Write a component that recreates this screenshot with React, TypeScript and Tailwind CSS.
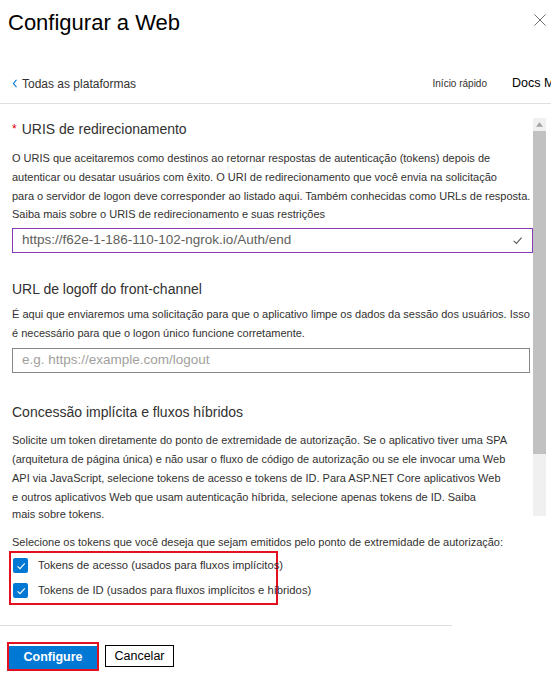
import React from "react";

const Check = ({ className }: { className?: string }) => (
  <svg viewBox="0 0 12 12" className={className} fill="none">
    <path d="M2.5 6.3 L5 8.6 L9.8 3.4" stroke="currentColor" strokeWidth="1.1" />
  </svg>
);

const Checkbox = ({ label }: { label: string }) => (
  <div className="flex items-center gap-[10px] h-[25px]">
    <span className="w-[15px] h-[15px] bg-[#0078d4] rounded-[2px] flex items-center justify-center text-white shrink-0">
      <Check className="w-[12px] h-[12px]" />
    </span>
    <span className="text-[11.25px] text-[#323130] whitespace-nowrap">{label}</span>
  </div>
);

const App: React.FC = () => {
  return (
    <div
      className="w-[551px] h-[685px] bg-white overflow-hidden text-[#323130]"
      style={{ fontFamily: '"Liberation Sans", Arial, sans-serif' }}
    >
      {/* header */}
      <div className="flex items-start justify-between pl-[8px] pr-[5px] pt-[9px] h-[64px]">
        <h1 className="text-[22px] leading-[28px] text-black">Configurar a Web</h1>
        <svg viewBox="0 0 12 12" className="w-[12px] h-[12px] mt-[5px] text-[#605e5c]">
          <path d="M0.5 0.5 L11.5 11.5 M11.5 0.5 L0.5 11.5" stroke="currentColor" strokeWidth="0.9" />
        </svg>
      </div>

      <div className="flex items-center h-[40px] pl-[12px] border-b border-[#e1dfdd]">
        <svg viewBox="0 0 8 12" className="w-[6px] h-[9px] text-[#0078d4] mr-[4px]">
          <path d="M6 1 L2 6 L6 11" stroke="currentColor" strokeWidth="1.6" fill="none" />
        </svg>
        <span className="text-[12px]">Todas as plataformas</span>
        <span className="ml-auto text-[10px] text-[#323130]">Início rápido</span>
        <span className="ml-[25px] text-[12.5px] text-black whitespace-nowrap w-[39px] overflow-hidden">Docs Mi</span>
      </div>

      <div className="flex">
        <div className="w-[533px] pl-[12px] overflow-hidden">
          {/* section 1 */}
          <div className="pt-[15px] text-[14px] leading-[20px] flex items-start">
            <span className="text-[#e50000] text-[12px] mr-[5px]">*</span>
            <span>URIS de redirecionamento</span>
          </div>
          <div className="mt-[10px] text-[11px] leading-[19px] whitespace-nowrap">
            <div>O URIS que aceitaremos como destinos ao retornar respostas de autenticação (tokens) depois de</div>
            <div>autenticar ou desatar usuários com êxito. O URI de redirecionamento que você envia na solicitação</div>
            <div>para o servidor de logon deve corresponder ao listado aqui. Também conhecidas como URLs de resposta.</div>
            <div className="leading-[16px]">Saiba mais sobre o URIS de redirecionamento e suas restrições</div>
          </div>
          <div className="mt-[6px] w-[521px] h-[25px] border border-[#8a3ab9] flex items-center pl-[9px] pr-[8px]">
            <span className="text-[13.5px] text-[#605e5c]">https://f62e-1-186-110-102-ngrok.io/Auth/end</span>
            <Check className="ml-auto w-[13px] h-[13px] text-[#605e5c]" />
          </div>

          {/* section 2 */}
          <div className="mt-[26px] text-[14px] leading-[20px]">URL de logoff do front-channel</div>
          <div className="mt-[6px] text-[11px] leading-[19px] whitespace-nowrap">
            <div>É aqui que enviaremos uma solicitação para que o aplicativo limpe os dados da sessão dos usuários. Isso</div>
            <div>é necessário para que o logon único funcione corretamente.</div>
          </div>
          <div className="mt-[5px] w-[518px] h-[25px] border border-[#8a8886] flex items-center pl-[9px]">
            <span className="text-[13.5px] text-[#a19f9d]">e.g. https://example.com/logout</span>
          </div>

          {/* section 3 */}
          <div className="mt-[29px] text-[14px] leading-[20px]">Concessão implícita e fluxos híbridos</div>
          <div className="mt-[9px] text-[11px] leading-[19px] whitespace-nowrap">
            <div>Solicite um token diretamente do ponto de extremidade de autorização. Se o aplicativo tiver uma SPA</div>
            <div>(arquitetura de página única) e não usar o fluxo de código de autorização ou se ele invocar uma Web</div>
            <div>API via JavaScript, selecione tokens de acesso e tokens de ID. Para ASP.NET Core aplicativos Web</div>
            <div>e outros aplicativos Web que usam autenticação híbrida, selecione apenas tokens de ID. Saiba</div>
            <div className="leading-[15px]">mais sobre tokens.</div>
          </div>

          <div className="mt-[12px] text-[11px] leading-[16px] whitespace-nowrap">
            Selecione os tokens que você deseja que sejam emitidos pelo ponto de extremidade de autorização:
          </div>
          <div className="mt-[1px] -ml-[3px] w-[269px] border-[2px] border-[#e3101f] px-[2px]">
            <Checkbox label="Tokens de acesso (usados para fluxos implícitos)" />
            <Checkbox label="Tokens de ID (usados para fluxos implícitos e híbridos)" />
          </div>
        </div>

        <div className="w-[13px] h-[398px] mt-[14px] bg-[#f0f0f0] flex flex-col items-center">
          <svg viewBox="0 0 8 5" className="w-[7px] h-[5px] mt-[4px] text-[#a3a3a3]">
            <path d="M0 5 L4 0 L8 5 Z" fill="currentColor" />
          </svg>
          <div className="mt-[4px] w-[13px] h-[323px] bg-[#c1c1c1]" />
        </div>
      </div>

      <div className="mt-[20px] w-[452px] border-t border-[#e1dfdd]" />

      <div className="flex items-center gap-[6px] pl-[7px] pt-[16px]">
        <div className="border-[2px] border-[#e3101f]">
          <button className="w-[88px] h-[23px] bg-[#0078d4] text-white text-[12.5px] font-bold">Configure</button>
        </div>
        <button className="w-[69px] h-[22px] border border-black bg-white text-[12.5px] text-black">Cancelar</button>
      </div>
    </div>
  );
};

export default App;
